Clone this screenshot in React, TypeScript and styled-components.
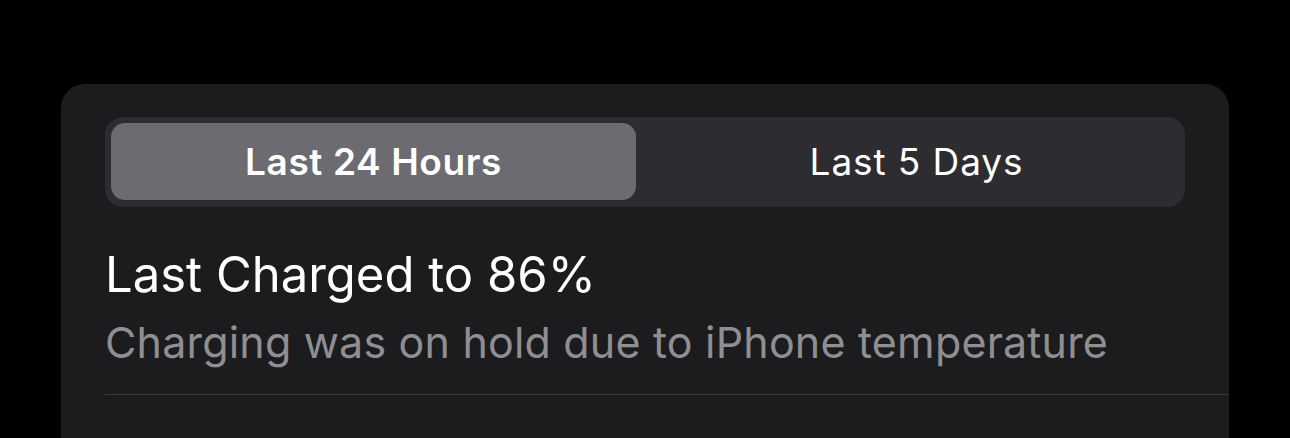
import React, { useState } from 'react';
import styled, { createGlobalStyle } from 'styled-components';

const GlobalStyle = createGlobalStyle`
    html, body {
        margin: 0;
        padding: 0;
        background: #000;
        height: 100%;
        overflow: hidden;
    }
    body {
        font-family: Inter, "Noto Sans", "Liberation Sans", sans-serif;
        -webkit-font-smoothing: antialiased;
    }
`;

// Card holding the battery panel
const Card = styled.div`
    margin: 84px 0 0 61px;
    width: 1168px;
    height: 354px;
    background-color: #1c1c1e;
    border-radius: 24px 24px 0 0;
    padding-top: 33px;
    box-sizing: border-box;
`;

const SegmentBar = styled.div`
    margin: 0 44px;
    height: 90px;
    padding: 6px 6px 7px;
    box-sizing: border-box;
    background-color: #2d2d31;
    border-radius: 18px;
    display: grid;
    grid-template-columns: 1fr 1fr;
    column-gap: 18px;
`;

const Segment = styled.button<{ active: boolean }>`
    border: none;
    border-radius: 14px;
    background-color: ${({ active }) => (active ? '#6c6b71' : 'transparent')};
    color: #fff;
    font-family: inherit;
    font-size: 37px;
    font-weight: ${({ active }) => (active ? 600 : 400)};
    letter-spacing: ${({ active }) => (active ? '0.6px' : '0.9px')};
    cursor: pointer;
    padding: 0;
`;

const Info = styled.div`
    padding: 39px 0 0 44px;
`;

const Title = styled.div`
    color: #fff;
    font-size: 49px;
    line-height: 58px;
    font-weight: 400;
`;

const Subtitle = styled.div`
    color: #8e8e93;
    font-size: 43px;
    line-height: 52px;
    letter-spacing: 0.18px;
    margin-top: 12px;
`;

const Divider = styled.div`
    margin: 26px 0 0 44px;
    height: 1px;
    background-color: #3a3a3c;
`;

const App: React.FC = () => {
    const [range, setRange] = useState(0);
    const tabs = ['Last 24 Hours', 'Last 5 Days'];

    return (
        <>
            <GlobalStyle />
            <Card>
                <SegmentBar>
                    {tabs.map((t, i) => (
                        <Segment key={t} active={range === i} onClick={() => setRange(i)}>
                            {t}
                        </Segment>
                    ))}
                </SegmentBar>
                <Info>
                    <Title>Last Charged to 86%</Title>
                    <Subtitle>Charging was on hold due to iPhone temperature</Subtitle>
                </Info>
                <Divider />
            </Card>
        </>
    );
};

export default App;
